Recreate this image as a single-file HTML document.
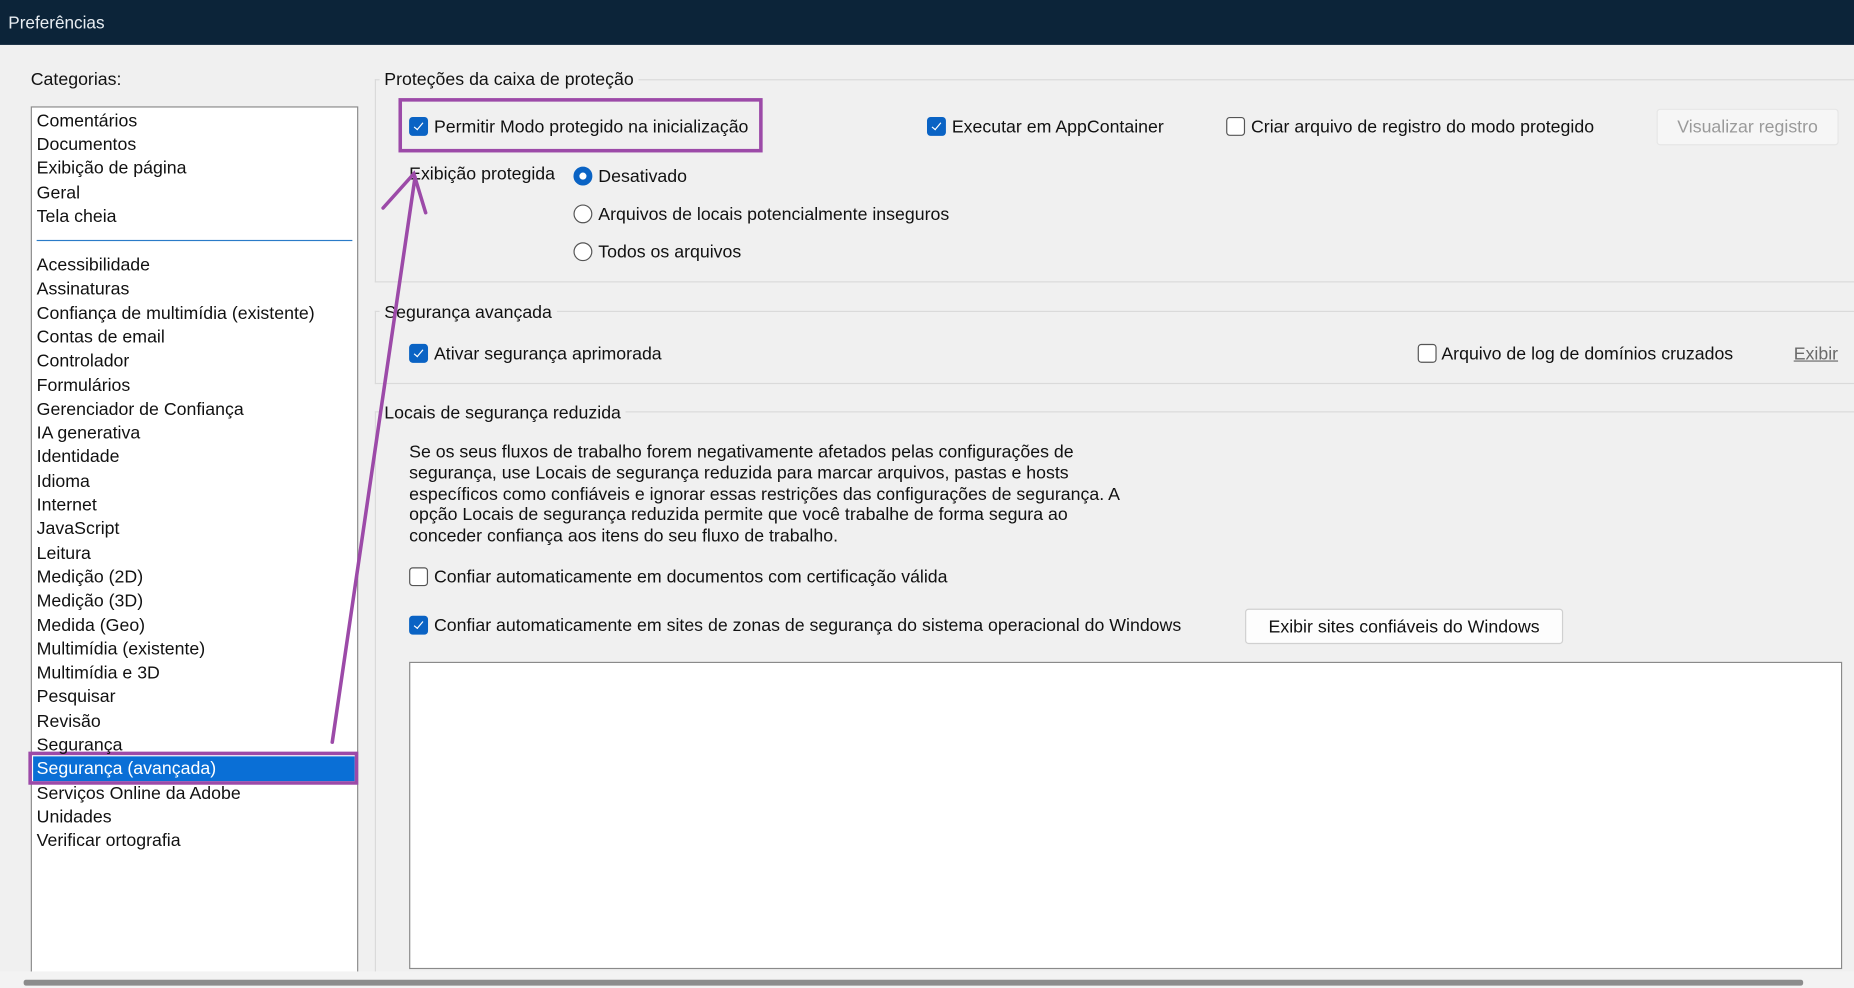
<!DOCTYPE html>
<html><head><meta charset="utf-8"><style>
html,body{margin:0;padding:0;width:1854px;height:988px;overflow:hidden;background:#f0f0f0}
#s{position:absolute;left:0;top:0;width:1568px;height:836px;transform:scale(1.18240,1.18182);transform-origin:0 0;font-family:"Liberation Sans",sans-serif;font-size:15px;color:#111}
.a{position:absolute;white-space:nowrap;line-height:18px;margin-top:1px}
.cb{position:absolute;width:14px;height:14px;border:1px solid #555;border-radius:3px;background:#fff;box-sizing:content-box}
.cb.on{background:#0a63c4;border-color:#0a63c4}
.cb.on:after{content:"";position:absolute;left:5px;top:2px;width:3px;height:7px;border:solid #fff;border-width:0 1px 1px 0;transform:rotate(40deg)}
.rd{position:absolute;width:14px;height:14px;border:1px solid #555;border-radius:50%;background:#fff}
.rd.on{border:5px solid #0a63c4;width:6px;height:6px;background:#fff}
.ln{position:absolute;background:#dadada}
.it{position:absolute;left:31px;white-space:nowrap;line-height:18px;margin-top:1px}
</style></head><body><div id="s">
<div style="position:absolute;left:0;top:0;width:1568px;height:38px;background:#0c2439"></div>
<div class="a" style="left:7px;top:10px;color:#e8edf2;font-size:14.5px">Preferências</div>
<div class="a" style="left:26px;top:58px">Categorias:</div>
<div style="position:absolute;left:26px;top:90px;width:275px;height:740px;background:#fff;border:1px solid #8a8a8a"></div>
<div style="position:absolute;left:31px;top:203px;width:267px;height:1px;background:#2a7bc8"></div>
<div style="position:absolute;left:28px;top:640px;width:272px;height:21px;background:#0a6fd6"></div>
<div style="position:absolute;left:24px;top:636px;width:273px;height:22px;border:3px solid #9c4aa8"></div>
<div class="ln" style="left:317px;top:67px;width:1251px;height:1px"></div>
<div class="ln" style="left:317px;top:67px;width:1px;height:172px"></div>
<div class="ln" style="left:317px;top:238px;width:1251px;height:1px"></div>
<div class="a" style="left:321px;top:58px;background:#f0f0f0;padding:0 4px">Proteções da caixa de proteção</div>
<div class="ln" style="left:317px;top:263px;width:1251px;height:1px"></div>
<div class="ln" style="left:317px;top:263px;width:1px;height:62px"></div>
<div class="ln" style="left:317px;top:324px;width:1251px;height:1px"></div>
<div class="a" style="left:321px;top:255px;background:#f0f0f0;padding:0 4px">Segurança avançada</div>
<div class="ln" style="left:317px;top:348px;width:1251px;height:1px"></div>
<div class="ln" style="left:317px;top:348px;width:1px;height:480px"></div>
<div class="a" style="left:321px;top:340px;background:#f0f0f0;padding:0 4px">Locais de segurança reduzida</div>

<div class="cb on" style="left:346px;top:99px"></div><div class="a" style="left:367px;top:98px">Permitir Modo protegido na inicialização</div>
<div style="position:absolute;left:337px;top:83px;width:302px;height:40px;border:3px solid #9c4aa8"></div>
<div class="cb on" style="left:784px;top:99px"></div><div class="a" style="left:805px;top:98px">Executar em AppContainer</div>
<div class="cb" style="left:1037px;top:99px"></div><div class="a" style="left:1058px;top:98px">Criar arquivo de registro do modo protegido</div>
<div style="position:absolute;left:1401px;top:92px;width:152px;height:29px;border:1px solid #e6e6e6;background:#f6f6f6;border-radius:3px;color:#9a9a9a;text-align:center;line-height:29px">Visualizar registro</div>
<div class="a" style="left:346px;top:138px">Exibição protegida</div>
<div class="rd on" style="left:485px;top:141px"></div><div class="a" style="left:506px;top:140px">Desativado</div>
<div class="rd" style="left:485px;top:173px"></div><div class="a" style="left:506px;top:172px">Arquivos de locais potencialmente inseguros</div>
<div class="rd" style="left:485px;top:205px"></div><div class="a" style="left:506px;top:204px">Todos os arquivos</div>

<div class="cb on" style="left:346px;top:291px"></div><div class="a" style="left:367px;top:290px">Ativar segurança aprimorada</div>
<div class="cb" style="left:1199px;top:291px"></div><div class="a" style="left:1219px;top:290px">Arquivo de log de domínios cruzados</div>
<div class="a" style="left:1517px;top:290px;color:#6a6a6a;text-decoration:underline">Exibir</div>

<div style="position:absolute;left:346px;top:374px;width:660px;line-height:17.8px;white-space:nowrap">Se os seus fluxos de trabalho forem negativamente afetados pelas configurações de<br>segurança, use Locais de segurança reduzida para marcar arquivos, pastas e hosts<br>específicos como confiáveis e ignorar essas restrições das configurações de segurança. A<br>opção Locais de segurança reduzida permite que você trabalhe de forma segura ao<br>conceder confiança aos itens do seu fluxo de trabalho.</div>
<div class="cb" style="left:346px;top:480px"></div><div class="a" style="left:367px;top:479px">Confiar automaticamente em documentos com certificação válida</div>
<div class="cb on" style="left:346px;top:521px"></div><div class="a" style="left:367px;top:520px">Confiar automaticamente em sites de zonas de segurança do sistema operacional do Windows</div>
<div style="position:absolute;left:1053px;top:515px;width:267px;height:28px;border:1px solid #d0d0d0;background:#fdfdfd;border-radius:3px;text-align:center;line-height:30px">Exibir sites confiáveis do Windows</div>
<div style="position:absolute;left:346px;top:560px;width:1210px;height:258px;background:#fff;border:1px solid #8a8a8a"></div>

<div style="position:absolute;left:0;top:822px;width:1568px;height:14px;background:#f3f3f3"></div>
<div style="position:absolute;left:20px;top:829px;width:1505px;height:5px;background:#8c8c8c;border-radius:2px"></div>
<div id="list"></div>
<svg style="position:absolute;left:0;top:0" width="1568" height="836"><g stroke="#9c4aa8" stroke-width="3" fill="none" stroke-linecap="round"><path d="M281 628 L351 150"/><path d="M324 176 L350 147 L360 180"/></g></svg>
</div>
<script>
var items=[["Comentários",102],["Documentos",122],["Exibição de página",142],["Geral",163],["Tela cheia",183]];
var rest=["Acessibilidade","Assinaturas","Confiança de multimídia (existente)","Contas de email","Controlador","Formulários","Gerenciador de Confiança","IA generativa","Identidade","Idioma","Internet","JavaScript","Leitura","Medição (2D)","Medição (3D)","Medida (Geo)","Multimídia (existente)","Multimídia e 3D","Pesquisar","Revisão","Segurança","Segurança (avançada)","Serviços Online da Adobe","Unidades","Verificar ortografia"];
rest.forEach(function(n,i){items.push([n,224+i*20.3]);});
var L=document.getElementById('list');
items.forEach(function(p){var d=document.createElement('div');d.className='it';d.textContent=p[0];d.style.top=(p[1]-9)+'px';if(p[0]=="Segurança (avançada)")d.style.color='#fff';L.appendChild(d);});
</script>
</body></html>
